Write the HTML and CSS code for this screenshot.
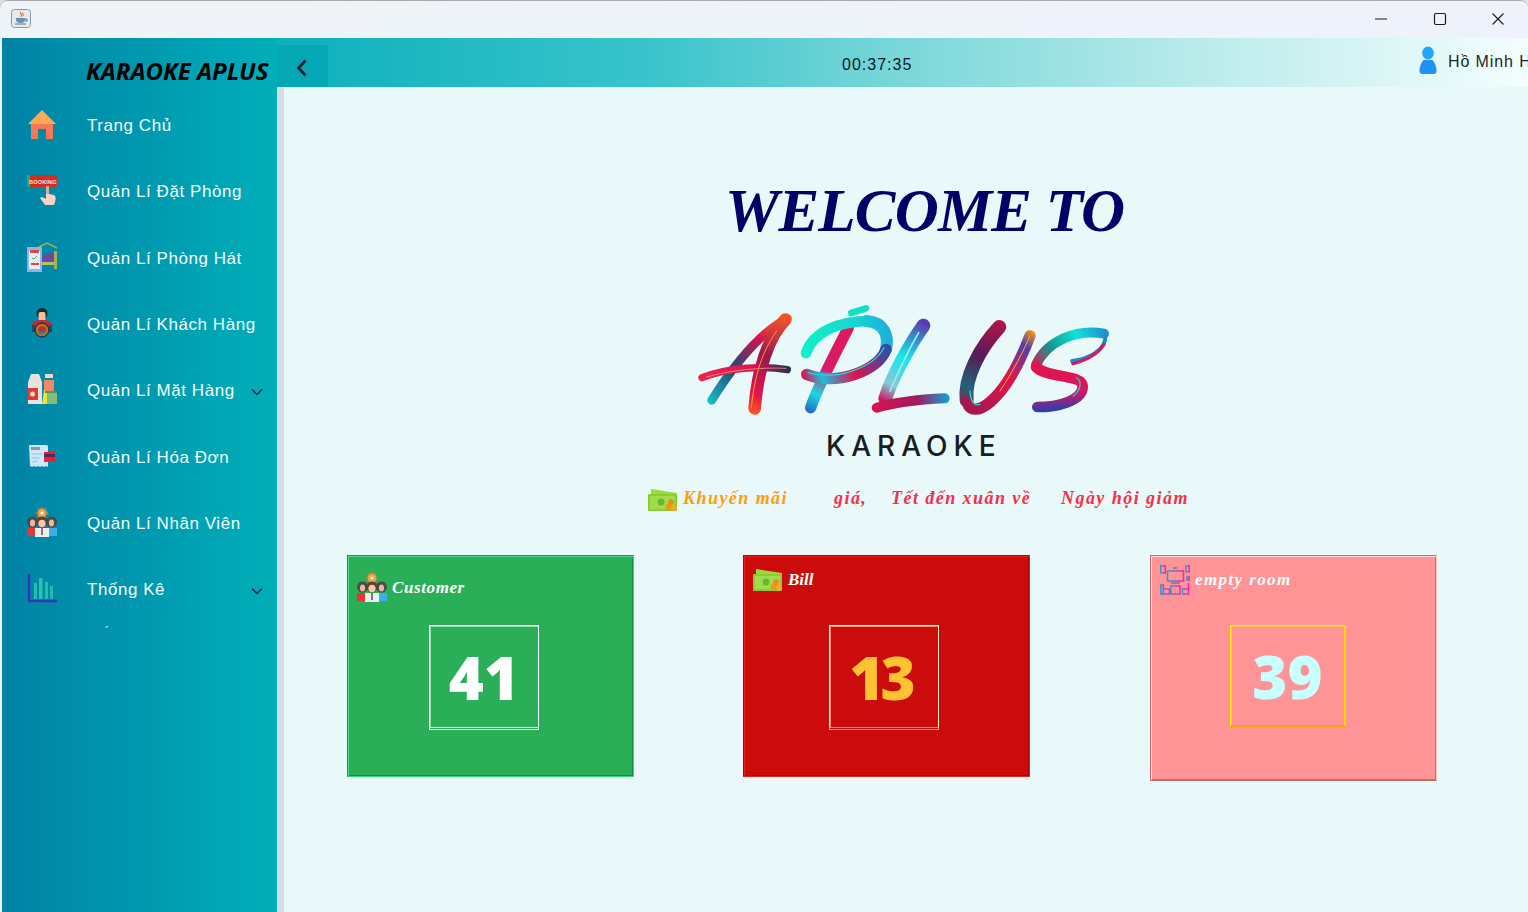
FILE: index.html
```html
<!DOCTYPE html>
<html lang="vi">
<head>
<meta charset="utf-8">
<title>Karaoke Aplus</title>
<link rel="stylesheet" href="styles.css">
</head>
<body>
<div class="window">
  <header class="titlebar">
    <span class="app-icon">
      <svg viewBox="0 0 20 20" width="20" height="20"><rect x="0.5" y="0.5" width="19" height="18" rx="3" fill="#e4e9f0" stroke="#8a97a8"/><path d="M10 3c-2 2 2 2 0 5M12 4c-1 1 1 2 0 3" fill="none" stroke="#e0701c" stroke-width="1.2"/><path d="M5 9h9v2c0 2-2 3-4.500 3S5 13 5 11z" fill="#6b8fb0"/><path d="M14 10h2v2h-2M4 15h11" fill="none" stroke="#55789a" stroke-width="1"/></svg>
    </span>
    <div class="win-controls">
      <svg class="win-btn" viewBox="0 0 14 14" width="14" height="14"><path d="M1 7h12" stroke="#1b1b1b" stroke-width="1"/></svg>
      <svg class="win-btn" viewBox="0 0 14 14" width="14" height="14"><rect x="1.500" y="1.500" width="11" height="11" rx="1.500" fill="none" stroke="#1b1b1b" stroke-width="1.200"/></svg>
      <svg class="win-btn" viewBox="0 0 14 14" width="14" height="14"><path d="M1.500 1.500l11 11M12.500 1.500l-11 11" stroke="#1b1b1b" stroke-width="1.100"/></svg>
    </div>
  </header>
  <div class="frame">
    <aside class="sidebar">
      <div class="brand">KARAOKE APLUS</div>
      <nav class="nav">
        <a class="nav-item">
          <svg class="nav-icon" viewBox="0 0 30 30"><path d="M15 1 29 15H1z" fill="#fdaa56"/><path d="M4 15h22v15H19V20h-8v10H4z" fill="#fb7755"/></svg>
          <span>Trang Chủ</span>
        </a>
        <a class="nav-item">
          <svg class="nav-icon" viewBox="0 0 30 30"><rect x="0" y="0" width="4" height="12" rx="1" fill="#2aa678"/><rect x="3" y="0" width="27" height="12" rx="1.500" fill="#cf2f1c"/><text class="tiny" x="2" y="8.500">BOOKING</text><path d="M19 11h3v8l5 1c2 1 2 4 1 7l-1 3h-9l-5-7 2-1 4 2z" fill="#fcd3c2"/><path d="M19 11h3v8h-3z" fill="#e3a898"/></svg>
          <span>Quản Lí Đặt Phòng</span>
        </a>
        <a class="nav-item">
          <svg class="nav-icon" viewBox="0 0 30 30"><path d="M10 6l10-5 10 5" fill="none" stroke="#a6b04c" stroke-width="1.500"/><rect x="0" y="5" width="15" height="25" fill="#8db6e6"/><rect x="2" y="9" width="11" height="18" fill="#e8eef5"/><rect x="3" y="8" width="9" height="3" fill="#e0493f"/><rect x="4" y="21" width="8" height="2" fill="#e0493f"/><path d="M5 16l2 1 3-3" fill="none" stroke="#5a9f5a"/><path d="M15 14l12-4v10H15z" fill="#6a4a9c"/><path d="M15 20h15v3H15z" fill="#b6c06a"/><rect x="27" y="9" width="3" height="18" fill="#a6b04c"/></svg>
          <span>Quản Lí Phòng Hát</span>
        </a>
        <a class="nav-item">
          <svg class="nav-icon" viewBox="0 0 30 30"><circle cx="15" cy="5.500" r="5.500" fill="#1c2730"/><rect x="11.500" y="4" width="7" height="9" rx="2" fill="#f3c39c"/><path d="M5 16c0-3 5-4 10-4s10 1 10 4v7H5z" fill="#b83040"/><path d="M5 17h3v7H5zM22 17h3v7h-3z" fill="#15506c"/><circle cx="15" cy="22" r="5" fill="none" stroke="#b6701c" stroke-width="2.500"/><circle cx="15" cy="22" r="7" fill="none" stroke="#2a2320" stroke-width="1"/></svg>
          <span>Quản Lí Khách Hàng</span>
        </a>
        <a class="nav-item">
          <svg class="nav-icon" viewBox="0 0 30 30"><path d="M1 8l3-8h8l3 8v22H1z" fill="#e6e3e0"/><rect x="1" y="14" width="10" height="12" fill="#e2382e"/><circle cx="5.500" cy="20" r="2.500" fill="#f8d7d0"/><rect x="18" y="0" width="8" height="4" fill="#f5d6c0"/><path d="M17 6h10v12H17z" fill="#f08a62"/><path d="M15 30l2-14 4 2 3 12z" fill="#f4e03a"/><rect x="20" y="18" width="10" height="12" fill="#7cc07a"/><rect x="18" y="17" width="12" height="2" fill="#4e9a5a"/></svg>
          <span>Quản Lí Mặt Hàng</span>
          <svg class="chevron" viewBox="0 0 12 8" width="12" height="8"><path d="M1 1.500l5 5 5-5" fill="none" stroke="#0b2430" stroke-width="1.400"/></svg>
        </a>
        <a class="nav-item">
          <svg class="nav-icon" viewBox="0 0 30 30"><path d="M2 4h18l1 1v21l-2-1-2 1-2-1-2 1-2-1-2 1-2-1-2 1-2-1z" fill="#cfe6f6"/><rect x="4" y="6" width="9" height="3" fill="#8a97a8"/><path d="M5 13h11M5 17h8M5 21l5-1" stroke="#8cc0e6" stroke-width="1.200"/><rect x="17" y="11" width="11" height="10" fill="#e8203f"/><rect x="17" y="13" width="11" height="3" fill="#5a2a4a"/></svg>
          <span>Quản Lí Hóa Đơn</span>
        </a>
        <a class="nav-item">
          <svg class="nav-icon" viewBox="0 0 30 30">
            <symbol id="team" viewBox="0 0 30 30">
              <circle cx="15" cy="6" r="4.500" fill="#f2a044"/><circle cx="15" cy="6" r="5.500" fill="none" stroke="#c87a26" stroke-width="1.500" stroke-dasharray="2 2"/><circle cx="15" cy="6" r="1.600" fill="#fff"/>
              <circle cx="5.500" cy="15" r="5.500" fill="#4a4a4a"/><circle cx="24.500" cy="15" r="5.500" fill="#4a4a4a"/><ellipse cx="5.500" cy="16" rx="2.600" ry="3.500" fill="#eeb898"/><ellipse cx="24.500" cy="16" rx="2.600" ry="3.500" fill="#eeb898"/>
              <rect x="0" y="21" width="9" height="8" fill="#e6363a"/><rect x="21" y="21" width="9" height="8" fill="#38b0e6"/>
              <circle cx="15" cy="15" r="5.500" fill="#5a4238"/><ellipse cx="15" cy="16.500" rx="3.600" ry="3.800" fill="#f6c8a8"/><rect x="8" y="21" width="14" height="9" fill="#eeeeee"/><rect x="14" y="21" width="2" height="7" fill="#7a7a7a"/>
            </symbol>
            <use href="#team"/>
          </svg>
          <span>Quản Lí Nhân Viên</span>
        </a>
        <a class="nav-item">
          <svg class="nav-icon" viewBox="0 0 30 30"><path d="M2 1v27h28" fill="none" stroke="#3038b8" stroke-width="2.500"/><rect x="7" y="10" width="3" height="16" fill="#22c0ac"/><rect x="12" y="5" width="3.500" height="21" fill="#26c4b0"/><rect x="18" y="9" width="3" height="17" fill="#22c0ac"/><rect x="23" y="13" width="3" height="13" fill="#28b8ac"/></svg>
          <span>Thống Kê</span>
          <svg class="chevron" viewBox="0 0 12 8" width="12" height="8"><path d="M1 1.500l5 5 5-5" fill="none" stroke="#0b2430" stroke-width="1.400"/></svg>
        </a>
      </nav>
      <div class="stray">´</div>
    </aside>
    <div class="main">
      <div class="topbar">
        <button class="back">
          <svg viewBox="0 0 12 18" width="12" height="18"><path d="M9.500 1.500 2.500 9l7 7.500" fill="none" stroke="#0c1c28" stroke-width="2.600"/></svg>
        </button>
        <div class="clock">00:37:35</div>
        <div class="user">
          <svg viewBox="0 0 20 28" width="18" height="28" preserveAspectRatio="none"><circle cx="10" cy="7" r="6.500" fill="#22a6fb"/><path d="M5 14h10c3 3 4.500 7 4.500 11 0 2-1.500 3-3.500 3H4c-2 0-3.500-1-3.500-3C.5 21 2 17 5 14z" fill="#2192f4"/></svg>
          <span class="user-name">Hồ Minh H</span>
        </div>
      </div>
      <div class="stage">
        <div class="strip"></div>
        <main class="content">
          <h1 class="welcome">WELCOME TO</h1>
          <div class="logo">
            <svg viewBox="0 0 1320 400" width="440" height="133.400" role="img" aria-label="Aplus logo">
              <defs>
                <linearGradient id="gA" gradientUnits="userSpaceOnUse" x1="60" y1="360" x2="330" y2="70"><stop offset="0" stop-color="#16e3e0"/><stop offset=".4" stop-color="#1d4a7a"/><stop offset=".7" stop-color="#d3134f"/><stop offset="1" stop-color="#ff7a1a"/></linearGradient>
                <linearGradient id="gA2" gradientUnits="userSpaceOnUse" x1="300" y1="80" x2="220" y2="370"><stop offset="0" stop-color="#f0522a"/><stop offset=".4" stop-color="#9a1852"/><stop offset=".8" stop-color="#e0144c"/><stop offset="1" stop-color="#ff5a1e"/></linearGradient>
                <linearGradient id="gBar" gradientUnits="userSpaceOnUse" x1="60" y1="260" x2="330" y2="230"><stop offset="0" stop-color="#f0244a"/><stop offset=".6" stop-color="#d8164f"/><stop offset="1" stop-color="#23304f"/></linearGradient>
                <linearGradient id="gP" gradientUnits="userSpaceOnUse" x1="370" y1="180" x2="640" y2="110"><stop offset="0" stop-color="#10f0c8"/><stop offset=".6" stop-color="#16d8d0"/><stop offset="1" stop-color="#1fa8e0"/></linearGradient>
                <linearGradient id="gP2" gradientUnits="userSpaceOnUse" x1="630" y1="180" x2="370" y2="260"><stop offset="0" stop-color="#2a4fa8"/><stop offset=".45" stop-color="#e0124e"/><stop offset=".8" stop-color="#1fbcd8"/><stop offset="1" stop-color="#d8164f"/></linearGradient>
                <linearGradient id="gPs" gradientUnits="userSpaceOnUse" x1="500" y1="110" x2="385" y2="360"><stop offset="0" stop-color="#e0185a"/><stop offset=".5" stop-color="#d81b6a"/><stop offset=".8" stop-color="#19d8e0"/><stop offset="1" stop-color="#2a6ac8"/></linearGradient>
                <linearGradient id="gL" gradientUnits="userSpaceOnUse" x1="735" y1="95" x2="610" y2="330"><stop offset="0" stop-color="#5a38b0"/><stop offset=".45" stop-color="#14e8e8"/><stop offset=".8" stop-color="#88c8d8"/><stop offset="1" stop-color="#c8185a"/></linearGradient>
                <linearGradient id="gL2" gradientUnits="userSpaceOnUse" x1="580" y1="355" x2="800" y2="325"><stop offset="0" stop-color="#d81450"/><stop offset=".6" stop-color="#a01a60"/><stop offset="1" stop-color="#1a98c8"/></linearGradient>
                <linearGradient id="gU" gradientUnits="userSpaceOnUse" x1="960" y1="95" x2="860" y2="360"><stop offset="0" stop-color="#b0144a"/><stop offset=".4" stop-color="#5a1a5a"/><stop offset=".75" stop-color="#23607a"/><stop offset="1" stop-color="#a01a4a"/></linearGradient>
                <linearGradient id="gU2" gradientUnits="userSpaceOnUse" x1="880" y1="360" x2="1060" y2="125"><stop offset="0" stop-color="#a8164e"/><stop offset=".5" stop-color="#e0144e"/><stop offset=".85" stop-color="#5040b0"/><stop offset="1" stop-color="#f09020"/></linearGradient>
                <linearGradient id="gS" gradientUnits="userSpaceOnUse" x1="1280" y1="125" x2="1060" y2="230"><stop offset="0" stop-color="#1f90d0"/><stop offset=".35" stop-color="#14e0d8"/><stop offset=".7" stop-color="#109a90"/><stop offset="1" stop-color="#e0144e"/></linearGradient>
                <linearGradient id="gS2" gradientUnits="userSpaceOnUse" x1="1060" y1="230" x2="1065" y2="355"><stop offset="0" stop-color="#e0144e"/><stop offset=".6" stop-color="#e0145a"/><stop offset="1" stop-color="#3a3aa8"/></linearGradient>
              </defs>
              <g fill="none" stroke-linecap="round" stroke-linejoin="round">
                <path d="M95 328C150 240 230 130 322 82" stroke="url(#gA)" stroke-width="26"/>
                <path d="M316 86C265 135 232 240 224 352" stroke="url(#gA2)" stroke-width="38"/>
                <path d="M66 260C140 232 240 222 322 236" stroke="url(#gBar)" stroke-width="22"/>
                <path d="M505 110C470 180 420 270 392 350" stroke="url(#gPs)" stroke-width="34"/>
                <path d="M378 186C400 120 480 92 560 90" stroke="url(#gP)" stroke-width="32"/>
                <path d="M514 66 558 52" stroke="#12e0c4" stroke-width="20"/>
                <path d="M560 90C610 94 628 130 618 175" stroke="url(#gP)" stroke-width="36"/>
                <path d="M618 175C596 240 470 285 380 250" stroke="url(#gP2)" stroke-width="34"/>
                <path d="M730 104C690 160 640 250 616 322" stroke="url(#gL)" stroke-width="42"/>
                <path d="M590 350C660 330 730 325 794 322" stroke="url(#gL2)" stroke-width="30"/>
                <path d="M958 108C900 170 852 260 860 328" stroke="url(#gU)" stroke-width="42"/>
                <path d="M862 335C876 385 970 345 1050 134" stroke="url(#gU2)" stroke-width="34"/>
                <path d="M1272 128C1190 112 1100 150 1068 222" stroke="url(#gS)" stroke-width="30"/>
                <path d="M1068 228C1100 262 1206 250 1208 285C1210 330 1130 348 1072 348" stroke="url(#gS2)" stroke-width="32"/>
                <path d="M1276 132C1280 180 1220 205 1176 210" stroke="#1f8cc8" stroke-width="12"/>
                <path d="M1272 160C1250 195 1210 210 1178 218" stroke="#d8185a" stroke-width="9"/>
                <path d="M80 258C150 238 240 228 318 232" stroke="#f8b0a0" stroke-width="2"/>
                <path d="M214 350C222 270 240 190 290 120" stroke="#ff9a2a" stroke-width="3"/>
                <path d="M384 245C470 270 580 230 612 170" stroke="#18d8e8" stroke-width="4"/>
                <path d="M630 300C660 230 690 170 716 125" stroke="#9af0f0" stroke-width="5"/>
                <path d="M870 300C872 330 880 345 900 340" stroke="#20d8d8" stroke-width="4"/>
                <path d="M1050 135C1030 180 1000 240 960 300" stroke="#ffb020" stroke-width="3"/>
                <path d="M1190 260C1205 270 1205 295 1180 315" stroke="#20c8e0" stroke-width="4"/>
              </g>
            </svg>
            <div class="logo-word">KARAOKE</div>
          </div>
          <div class="promo">
            <svg class="promo-icon" viewBox="0 0 30 22">
              <symbol id="money" viewBox="0 0 30 22">
                <path d="M3 0 29 4 28 8 3 6z" fill="#9ed83c"/><rect x="0" y="5" width="29" height="17" rx="1" fill="#86d02e"/><rect x="2" y="7" width="25" height="13" fill="#a0dc50"/><circle cx="13" cy="13" r="3.500" fill="#6ab82a"/>
                <circle cx="21" cy="18" r="3.500" fill="#e89a1c"/><circle cx="26" cy="19" r="3" fill="#f0aa28"/><circle cx="23" cy="13" r="3" fill="#e8901a"/>
              </symbol>
              <use href="#money"/>
            </svg>
            <span class="promo-a">Khuyến mãi</span>
            <span class="promo-b">giá,</span>
            <span class="promo-c">Tết đến xuân về</span>
            <span class="promo-d">Ngày hội giảm</span>
          </div>
          <div class="cards">
            <section class="card card-green">
              <div class="card-head">
                <svg class="card-icon" viewBox="0 0 30 30"><use href="#team"/></svg>
                <span class="card-title">Customer</span>
              </div>
              <div class="count"><span>41</span></div>
            </section>
            <section class="card card-red">
              <div class="card-head">
                <svg class="card-icon-wide" viewBox="0 0 30 22"><use href="#money"/></svg>
                <span class="card-title">Bill</span>
              </div>
              <div class="count"><span>13</span></div>
            </section>
            <section class="card card-pink">
              <div class="card-head">
                <svg class="card-icon" viewBox="0 0 30 30">
                  <defs><linearGradient id="gRoom" x1="0" x2="1"><stop offset="0" stop-color="#2f9bc8"/><stop offset="1" stop-color="#ff1fb0"/></linearGradient></defs>
                  <g fill="none" stroke="url(#gRoom)" stroke-width="1.500">
                    <rect x=".8" y=".8" width="4.500" height="7"/><rect x="26" y=".8" width="3.200" height="6"/><rect x="7.500" y="6" width="16" height="10"/><rect x="27" y="12" width="2.200" height="3"/><rect x=".8" y="20" width="2.500" height="9"/><rect x="3.500" y="24" width="6" height="5"/><rect x="11" y="21" width="9" height="8"/><rect x="22.500" y="24" width="6" height="5"/><path d="M28.500 18v6M13 3h4M11 18h9"/>
                  </g>
                </svg>
                <span class="card-title">empty room</span>
              </div>
              <div class="count"><span>39</span></div>
            </section>
          </div>
        </main>
      </div>
    </div>
  </div>
</div>
</body>
</html>
```

FILE: styles.css
```css
* { box-sizing: border-box; }
html, body { margin: 0; padding: 0; width: 1528px; height: 912px; overflow: hidden; background: #dfe3e8; }
svg { display: block; flex: none; }
.window {
  width: 1528px; height: 912px; display: flex; flex-direction: column;
  border-top: 1px solid #a9a9a9; border-radius: 8px 8px 0 0; overflow: hidden;
  background: #eff4f9; padding-left: 2px;
  font-family: "Liberation Sans", Arial, sans-serif;
}
.titlebar {
  flex: none; height: 37px; display: flex; align-items: center;
  background: linear-gradient(90deg, #eff4f8, #eef2fb);
  padding-left: 9px;
}
.app-icon { width: 20px; height: 20px; margin-top: -1px; }
.win-controls { margin-left: auto; display: flex; gap: 44.500px; margin-right: 23px; margin-top: -1px; }
.frame { flex: 1; display: flex; min-height: 0; }

.sidebar {
  flex: none; width: 275px; height: 100%;
  background: linear-gradient(90deg, #0082a5 0%, #00afb9 100%);
  color: #fff;
}
.brand {
  height: 54px; padding: 17px 0 0 84px;
  font-family: "Open Sans", sans-serif; font-weight: 700; font-style: italic;
  font-size: 24px; line-height: 32px; color: #000; white-space: nowrap;
}
.nav { display: flex; flex-direction: column; }
.nav-item {
  height: 66.300px; display: flex; align-items: center; padding-left: 25px; padding-right: 14px;
  font-size: 17px; letter-spacing: .55px; color: #f2fcfc; white-space: nowrap;
}
.nav-item span { margin-left: 30px; padding-top: 2px; }
.nav-icon { width: 30px; height: 30px; margin-top: -2px; }
.tiny { font-size: 5.500px; fill: #f5e8d8; font-family: "Liberation Sans", sans-serif; font-weight: 700; letter-spacing: .2px; }
.chevron { margin-left: auto; margin-top: 3px; }
.stray { padding-left: 103px; margin-top: 3px; font-size: 12px; line-height: 14px; color: #fff; }

.main { flex: 1; min-width: 0; display: flex; flex-direction: column; }
.topbar {
  flex: none; height: 49px; display: flex;
  background: linear-gradient(90deg, #0cb0bb 0%, #3ac4cb 30%, #7ad7da 50%, #bdecec 75%, #f4fefe 100%);
}
.back {
  width: 51px; height: 42px; margin-top: 7px; border: 0; padding: 3px 2px 0 0;
  background: #03a8b4; display: flex; align-items: center; justify-content: center;
}
.clock { margin-left: 514px; padding-top: 18px; font-size: 16px; line-height: 18px; letter-spacing: 1px; color: #0c1820; width: 80px; }
.user { margin-left: auto; display: flex; width: 109px; overflow: hidden; flex: none; padding-top: 8px; }
.user svg { margin-right: 11px; }
.user-name { font-size: 16px; line-height: 18px; padding-top: 7px; letter-spacing: .9px; color: #1a2630; white-space: nowrap; }

.stage { flex: 1; display: flex; min-height: 0; }
.strip { flex: none; width: 7px; background: #d8dce5; }
.content { flex: 1; min-width: 0; background: #e9f9f9; padding-top: 92px; }
.welcome {
  margin: 0; padding-left: 441px; height: 64px;
  font-family: "Liberation Serif", "Times New Roman", serif; font-weight: 700; font-style: italic;
  font-size: 61px; line-height: 64px; color: #000066; white-space: nowrap; letter-spacing: -.8px;
}
.logo { margin: 48px 0 0 396px; width: 440px; }
.logo-word {
  margin: 7px 0 0 146px; font-family: "Inter", "Open Sans", sans-serif; font-weight: 500; font-size: 28px;
  line-height: 30px; letter-spacing: 6px; color: #15201f; white-space: nowrap;
}
.promo {
  display: flex; align-items: center; height: 24px; margin: 25px 0 0 364px;
  font-family: "Liberation Serif", serif; font-weight: 700; font-style: italic; font-size: 18px;
  letter-spacing: 1.450px; white-space: nowrap;
}
.promo-icon { width: 30px; height: 22px; margin-top: 3px; }
.promo-a { color: #ff9d0a; margin-left: 5px; width: 151px; }
.promo-b { color: #f5304a; width: 57px; }
.promo-c { color: #f5304a; width: 170px; }
.promo-d { color: #f5304a; }

.cards { display: flex; align-items: flex-start; margin: 45px 0 0 63px; }
.card { width: 287px; display: flex; flex-direction: column; border: 1px solid; color: #fff; }
.card-head { display: flex; align-items: center; }
.card-icon { width: 30px; height: 30px; }
.card-icon-wide { width: 30px; height: 22px; }
.card-title {
  margin-left: 5px; font-family: "Liberation Serif", serif; font-weight: 700; font-style: italic;
  font-size: 17px; letter-spacing: .6px; color: #fff; white-space: nowrap;
}
.count {
  display: flex; align-items: center; justify-content: center; color: #fff;
  font-family: "Open Sans", sans-serif; font-weight: 800; font-size: 60px; line-height: 60px;
}
.count span { margin-top: 1px; }

.card-green {
  height: 222px; padding: 16px 0 0 9px; background: #2bae58;
  border-color: #129a48 #33dd77 #33dd77 #129a48;
  box-shadow: inset 1px 1px 0 #52dc88, inset -1px -1px 0 #148a44;
}
.card-green .card-title { padding-top: 1px; }
.card-green .count {
  width: 110px; height: 105px; margin: 23px 0 0 72px;
  border: 1px solid #f0ffff; border-bottom: 3px double #f0ffff;
  box-shadow: inset 1px 1px 0 rgba(255, 255, 255, .55);
}

.card-red {
  height: 222px; margin-left: 109px; padding: 13px 0 0 9px; background: #cc0c0c;
  border-color: #a80808 #f02020 #f02020 #a80808;
  box-shadow: inset 1px 1px 0 #f01c1c, inset -1px -1px 0 #a00808;
}
.card-red .card-title { letter-spacing: 0; }
.card-red .count {
  width: 110px; height: 105px; margin: 34px 0 0 76px;
  border: 1px solid #fff6d0; border-bottom: 3px double #ff9d0a; color: #ffc233;
  box-shadow: inset 1px 1px 0 rgba(255, 235, 170, .6);
}
.card-red .count span { letter-spacing: -4px; margin-right: 7px; }

.card-pink {
  height: 226px; margin-left: 120px; padding: 9px 0 0 9px; background: #ff9496;
  border-color: #c06c6c #f8c8c8 #c06c6c #c06c6c;
  box-shadow: inset 1px 1px 0 #ffd8d8, inset -1px -1px 0 #c46e6e;
}
.card-pink .card-title { letter-spacing: 1.400px; }
.card-pink .count {
  width: 116px; height: 102px; margin: 30px 0 0 70px;
  border: 1px solid #ffee00; border-bottom: 2px solid #ff9d0a; border-right: 2px solid #ffdd00; color: #c8ffff;
  box-shadow: inset 1px 1px 0 rgba(255, 238, 0, .6);
}
```
